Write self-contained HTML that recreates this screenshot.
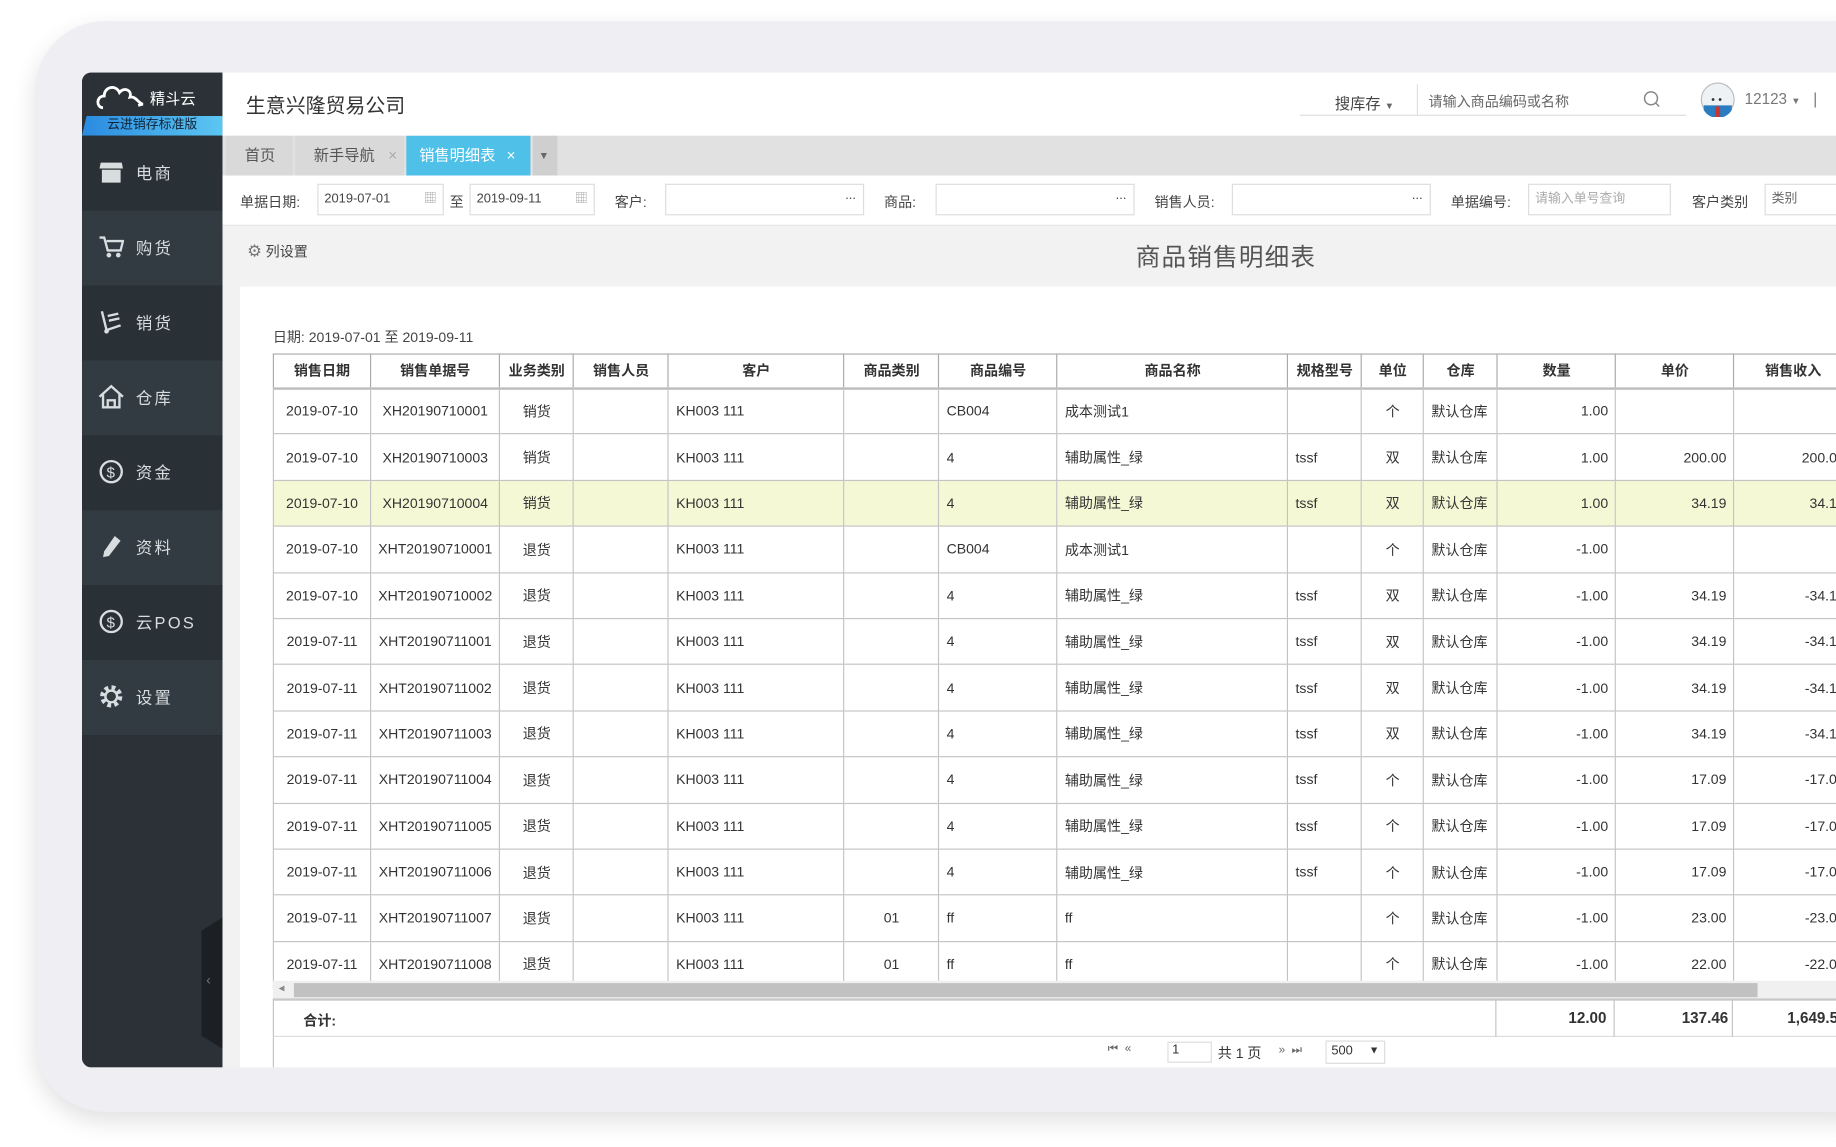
<!DOCTYPE html>
<html><head><meta charset="utf-8">
<style>
*{box-sizing:border-box;margin:0;padding:0}
html,body{width:1836px;height:1147px;overflow:hidden;background:#fff}
body{font-family:"Liberation Sans","Noto Sans CJK SC",sans-serif;color:#333}
#w{position:absolute;left:0;top:0;width:1568px;height:980px;transform:scale(1.17092,1.1704);transform-origin:0 0;overflow:hidden;background:#fff}
.abs{position:absolute}
.card{left:30px;top:18px;width:1600px;height:932px;background:#eeeef3;border-radius:60px;box-shadow:0 8px 20px rgba(0,0,0,.12)}
.app{left:70px;top:62px;width:1520px;height:850px;background:#f2f2f2;border-radius:8px 0 0 8px;overflow:hidden}
.side{left:0;top:0;width:120px;height:850px;background:#2b3136}
.side .it{position:absolute;left:0;width:120px;height:64px;color:#d8dde0;font-size:14px;letter-spacing:2px}
.side .it span{position:absolute;left:46px;top:22px}
.side .it svg{position:absolute;left:14px;top:20px}
.hdr{left:120px;top:0;width:1400px;height:54px;background:#fff}
.tabs{left:120px;top:54px;width:1400px;height:34px;background:#e1e1e1}
.tab{position:absolute;top:0;height:34px;line-height:34px;font-size:13px;color:#555;background:#d9d9d9;padding-left:16px}
.flt{left:120px;top:88px;width:1400px;height:43px;background:#fff;border-bottom:1px solid #e6e6e6}
.lbl{position:absolute;top:14px;font-size:12px;color:#444}
.inp{position:absolute;top:7px;height:27px;border:1px solid #ddd;background:#fff;font-size:11px;color:#444;line-height:25px;padding-left:5px}
.panel{left:135px;top:183px;width:1400px;height:680px;background:#fff}
table{border-collapse:collapse;table-layout:fixed;position:absolute;left:163px;top:240px;font-size:12px}
td,th{border:1px solid #c4c4c4;height:39.4px;padding:0 6px;white-space:nowrap;overflow:hidden;color:#333;font-weight:normal}
th{height:29px;font-weight:bold;text-align:center;border-color:#aaa;border-bottom:2px solid #bbb}
td.c{text-align:center}td.r{text-align:right}
tr.hl td{background:#f5f8d4}
</style></head><body><div id="w">
<div class="abs card"></div>
<div class="abs app">
 <div class="abs side">
  <div class="abs" style="left:0;top:0;width:120px;height:37px;background:#2b3136"></div>
  <svg class="abs" style="left:12px;top:6px" width="44" height="30" viewBox="0 0 44 30"><path d="M6 24 C0 24 0 14 7 14 C7 6 17 4 20 11 C24 6 31 9 29 15 C34 14 36 20 40 21 L36 22" fill="none" stroke="#fff" stroke-width="2.4"/></svg>
  <div class="abs" style="left:58px;top:12px;color:#fff;font-size:13px">精斗云</div>
  <div class="abs" style="left:0;top:37px;width:120px;height:17px;background:linear-gradient(90deg,#2a8be0,#5cc6f2);color:#123;font-size:11px;line-height:17px;text-align:center;clip-path:polygon(4px 0,100% 0,100% 100%,0 100%)">云进销存标准版</div>
  <div class="it" style="top:54px;background:#2a3136"><svg width="22" height="22" viewBox="0 0 22 22"><path d="M2 3h18l1 5H1zM3 9h16v11H3zM7 13h8v5H7z" fill="#d8dde0"/></svg><span>电商</span></div>
  <div class="it" style="top:118px;background:#323b42"><svg width="22" height="22" viewBox="0 0 22 22"><path d="M1 3h4l3 11h11l2-8H7" fill="none" stroke="#d8dde0" stroke-width="2"/><circle cx="9" cy="18" r="2" fill="#d8dde0"/><circle cx="17" cy="18" r="2" fill="#d8dde0"/></svg><span>购货</span></div>
  <div class="it" style="top:182px;background:#2a3136"><svg width="22" height="22" viewBox="0 0 22 22"><path d="M3 2l4 16 12-4M8 6l9-2M9 10l9-2" fill="none" stroke="#d8dde0" stroke-width="2"/><circle cx="7" cy="19" r="2" fill="#d8dde0"/></svg><span>销货</span></div>
  <div class="it" style="top:246px;background:#323b42"><svg width="22" height="22" viewBox="0 0 22 22"><path d="M1 11L11 2l10 9M4 9v11h14V9M8 20v-6h6v6" fill="none" stroke="#d8dde0" stroke-width="2"/></svg><span>仓库</span></div>
  <div class="it" style="top:310px;background:#2a3136"><svg width="22" height="22" viewBox="0 0 22 22"><circle cx="11" cy="11" r="9" fill="none" stroke="#d8dde0" stroke-width="2"/><text x="7" y="16" font-size="13" fill="#d8dde0" font-family="Liberation Sans">$</text></svg><span>资金</span></div>
  <div class="it" style="top:374px;background:#323b42"><svg width="22" height="22" viewBox="0 0 22 22"><path d="M14 2l5 4-10 13-5 1 1-5z" fill="#d8dde0"/></svg><span>资料</span></div>
  <div class="it" style="top:438px;background:#2a3136"><svg width="22" height="22" viewBox="0 0 22 22"><circle cx="11" cy="11" r="9" fill="none" stroke="#d8dde0" stroke-width="2"/><text x="7" y="16" font-size="13" fill="#d8dde0" font-family="Liberation Sans">$</text></svg><span>云POS</span></div>
  <div class="it" style="top:502px;background:#323b42"><svg width="22" height="22" viewBox="0 0 22 22"><circle cx="11" cy="11" r="7" fill="none" stroke="#d8dde0" stroke-width="5" stroke-dasharray="3 2.5"/><circle cx="11" cy="11" r="5" fill="none" stroke="#d8dde0" stroke-width="2"/></svg><span>设置</span></div>
  <div class="abs" style="left:102px;top:722px;width:18px;height:112px;background:#1c2024;clip-path:polygon(100% 0,100% 100%,0 90%,0 10%)"></div>
  <div class="abs" style="left:106px;top:768px;color:#777;font-size:12px">‹</div>
 </div>
 <div class="abs hdr">
  <div class="abs" style="left:20px;top:14px;font-size:17px;color:#333">生意兴隆贸易公司</div>
  <div class="abs" style="left:920px;top:0;width:330px;height:37px;border-bottom:1px solid #ddd"></div>
  <div class="abs" style="left:950px;top:16px;font-size:13px;color:#444">搜库存 <span style="font-size:8px;color:#666">▼</span></div>
  <div class="abs" style="left:1020px;top:10px;width:1px;height:26px;background:#e0e0e0"></div>
  <div class="abs" style="left:1030px;top:16px;font-size:12px;color:#666">请输入商品编码或名称</div>
  <svg class="abs" style="left:1213px;top:15px" width="16" height="16"><circle cx="7" cy="7" r="5.5" fill="none" stroke="#888" stroke-width="1.3"/><path d="M11 11l3 3" stroke="#888" stroke-width="1.3"/></svg>
  <svg class="abs" style="left:1262px;top:8px" width="30" height="30" viewBox="0 0 30 30"><circle cx="15" cy="15" r="14" fill="#eef2f5" stroke="#bbb"/><path d="M3 20h24v4a14 14 0 0 1-24 0z" fill="#2a7dc0"/><path d="M13 21h4v9h-4z" fill="#c33"/><circle cx="11" cy="15" r="1.2" fill="#333"/><circle cx="17" cy="15" r="1.2" fill="#333"/></svg>
  <div class="abs" style="left:1300px;top:15px;font-size:13px;color:#777">12123 <span style="font-size:8px">▼</span>&nbsp;&nbsp;&nbsp;|</div>
 </div>
 <div class="abs tabs">
  <div class="tab" style="left:3px;width:57px">首页</div>
  <div class="tab" style="left:62px;width:93px">新手导航 <span style="color:#aaa;margin-left:8px">×</span></div>
  <div class="tab" style="left:157px;width:106px;background:#4fc0e8;color:#fff;padding-left:11px">销售明细表 <span style="margin-left:6px">×</span></div>
  <div class="tab" style="left:265px;width:21px;background:#cfcfcf;padding-left:5px;font-size:9px;color:#666">▼</div>
 </div>
 <div class="abs flt">
  <div class="lbl" style="left:15px">单据日期:</div>
  <div class="inp" style="left:81px;width:108px">2019-07-01<span style="position:absolute;right:5px;color:#aaa">▦</span></div>
  <div class="lbl" style="left:194px">至</div>
  <div class="inp" style="left:211px;width:107px">2019-09-11<span style="position:absolute;right:5px;color:#aaa">▦</span></div>
  <div class="lbl" style="left:335px">客户:</div>
  <div class="inp" style="left:378px;width:170px"><span style="position:absolute;right:6px;top:-3px">...</span></div>
  <div class="lbl" style="left:565px">商品:</div>
  <div class="inp" style="left:609px;width:170px"><span style="position:absolute;right:6px;top:-3px">...</span></div>
  <div class="lbl" style="left:796px">销售人员:</div>
  <div class="inp" style="left:862px;width:170px"><span style="position:absolute;right:6px;top:-3px">...</span></div>
  <div class="lbl" style="left:1049px">单据编号:</div>
  <div class="inp" style="left:1115px;width:122px;color:#aaa">请输入单号查询</div>
  <div class="lbl" style="left:1255px">客户类别</div>
  <div class="inp" style="left:1317px;width:100px;color:#666">类别</div>
 </div>
 <div class="abs" style="left:141px;top:144px;font-size:12px;color:#444"><span style="color:#777;font-size:14px">⚙</span> 列设置</div>
 <div class="abs" style="left:900px;top:142px;font-size:21px;color:#555;letter-spacing:1px">商品销售明细表</div>
 <div class="abs panel"></div>
 <div class="abs" style="left:163px;top:217px;font-size:12px;color:#444">日期: 2019-07-01 至 2019-09-11</div>
 <table>
  <colgroup><col style="width:83px"><col style="width:110px"><col style="width:63px"><col style="width:81px"><col style="width:150px"><col style="width:81px"><col style="width:101px"><col style="width:197px"><col style="width:63px"><col style="width:53px"><col style="width:63px"><col style="width:101px"><col style="width:101px"><col style="width:101px"></colgroup>
  <tr><th>销售日期</th><th>销售单据号</th><th>业务类别</th><th>销售人员</th><th>客户</th><th>商品类别</th><th>商品编号</th><th>商品名称</th><th>规格型号</th><th>单位</th><th>仓库</th><th>数量</th><th>单价</th><th>销售收入</th></tr>
  <tr><td class="c">2019-07-10</td><td class="c">XH20190710001</td><td class="c">销货</td><td></td><td>KH003 111</td><td></td><td>CB004</td><td>成本测试1</td><td></td><td class="c">个</td><td>默认仓库</td><td class="r">1.00</td><td></td><td></td></tr>
  <tr><td class="c">2019-07-10</td><td class="c">XH20190710003</td><td class="c">销货</td><td></td><td>KH003 111</td><td></td><td>4</td><td>辅助属性_绿</td><td>tssf</td><td class="c">双</td><td>默认仓库</td><td class="r">1.00</td><td class="r">200.00</td><td class="r">200.00</td></tr>
  <tr class="hl"><td class="c">2019-07-10</td><td class="c">XH20190710004</td><td class="c">销货</td><td></td><td>KH003 111</td><td></td><td>4</td><td>辅助属性_绿</td><td>tssf</td><td class="c">双</td><td>默认仓库</td><td class="r">1.00</td><td class="r">34.19</td><td class="r">34.19</td></tr>
  <tr><td class="c">2019-07-10</td><td class="c">XHT20190710001</td><td class="c">退货</td><td></td><td>KH003 111</td><td></td><td>CB004</td><td>成本测试1</td><td></td><td class="c">个</td><td>默认仓库</td><td class="r">-1.00</td><td></td><td></td></tr>
  <tr><td class="c">2019-07-10</td><td class="c">XHT20190710002</td><td class="c">退货</td><td></td><td>KH003 111</td><td></td><td>4</td><td>辅助属性_绿</td><td>tssf</td><td class="c">双</td><td>默认仓库</td><td class="r">-1.00</td><td class="r">34.19</td><td class="r">-34.19</td></tr>
  <tr><td class="c">2019-07-11</td><td class="c">XHT20190711001</td><td class="c">退货</td><td></td><td>KH003 111</td><td></td><td>4</td><td>辅助属性_绿</td><td>tssf</td><td class="c">双</td><td>默认仓库</td><td class="r">-1.00</td><td class="r">34.19</td><td class="r">-34.19</td></tr>
  <tr><td class="c">2019-07-11</td><td class="c">XHT20190711002</td><td class="c">退货</td><td></td><td>KH003 111</td><td></td><td>4</td><td>辅助属性_绿</td><td>tssf</td><td class="c">双</td><td>默认仓库</td><td class="r">-1.00</td><td class="r">34.19</td><td class="r">-34.19</td></tr>
  <tr><td class="c">2019-07-11</td><td class="c">XHT20190711003</td><td class="c">退货</td><td></td><td>KH003 111</td><td></td><td>4</td><td>辅助属性_绿</td><td>tssf</td><td class="c">双</td><td>默认仓库</td><td class="r">-1.00</td><td class="r">34.19</td><td class="r">-34.19</td></tr>
  <tr><td class="c">2019-07-11</td><td class="c">XHT20190711004</td><td class="c">退货</td><td></td><td>KH003 111</td><td></td><td>4</td><td>辅助属性_绿</td><td>tssf</td><td class="c">个</td><td>默认仓库</td><td class="r">-1.00</td><td class="r">17.09</td><td class="r">-17.09</td></tr>
  <tr><td class="c">2019-07-11</td><td class="c">XHT20190711005</td><td class="c">退货</td><td></td><td>KH003 111</td><td></td><td>4</td><td>辅助属性_绿</td><td>tssf</td><td class="c">个</td><td>默认仓库</td><td class="r">-1.00</td><td class="r">17.09</td><td class="r">-17.09</td></tr>
  <tr><td class="c">2019-07-11</td><td class="c">XHT20190711006</td><td class="c">退货</td><td></td><td>KH003 111</td><td></td><td>4</td><td>辅助属性_绿</td><td>tssf</td><td class="c">个</td><td>默认仓库</td><td class="r">-1.00</td><td class="r">17.09</td><td class="r">-17.09</td></tr>
  <tr><td class="c">2019-07-11</td><td class="c">XHT20190711007</td><td class="c">退货</td><td></td><td>KH003 111</td><td class="c">01</td><td>ff</td><td>ff</td><td></td><td class="c">个</td><td>默认仓库</td><td class="r">-1.00</td><td class="r">23.00</td><td class="r">-23.00</td></tr>
  <tr><td class="c">2019-07-11</td><td class="c">XHT20190711008</td><td class="c">退货</td><td></td><td>KH003 111</td><td class="c">01</td><td>ff</td><td>ff</td><td></td><td class="c">个</td><td>默认仓库</td><td class="r">-1.00</td><td class="r">22.00</td><td class="r">-22.00</td></tr>
 </table>
 <div class="abs" style="left:163px;top:776px;width:1400px;height:16px;background:#f0f0f0"></div>
 <div class="abs" style="left:181px;top:778px;width:1250px;height:12px;background:#c1c1c1"></div>
 <div class="abs" style="left:168px;top:777px;font-size:10px;color:#888">◂</div>
 <div class="abs" style="left:163px;top:791px;width:1400px;height:33px;background:#fff;border-top:2px solid #c8c8c8;border-bottom:1px solid #ddd;border-left:1px solid #c4c4c4"></div>
 <div class="abs" style="left:1207px;top:792px;width:1px;height:32px;background:#c4c4c4"></div>
 <div class="abs" style="left:1308px;top:792px;width:1px;height:32px;background:#c4c4c4"></div>
 <div class="abs" style="left:1409px;top:792px;width:1px;height:32px;background:#c4c4c4"></div>
 <div class="abs" style="left:189px;top:801px;font-size:12px;font-weight:bold">合计:</div>
 <div class="abs" style="left:1207px;top:800px;width:95px;text-align:right;font-size:13px;font-weight:bold">12.00</div>
 <div class="abs" style="left:1308px;top:800px;width:98px;text-align:right;font-size:13px;font-weight:bold">137.46</div>
 <div class="abs" style="left:1409px;top:800px;width:98px;text-align:right;font-size:13px;font-weight:bold">1,649.58</div>
 <div class="abs" style="left:163px;top:824px;width:1px;height:30px;background:#c4c4c4"></div>
 <div class="abs" style="left:876px;top:829px;font-size:10px;color:#666">⏮&nbsp;&nbsp;«</div>
 <div class="abs" style="left:927px;top:828px;width:38px;height:18px;border:1px solid #ddd;font-size:11px;padding-left:3px">1</div>
 <div class="abs" style="left:970px;top:829px;font-size:12px">共 1 页</div>
 <div class="abs" style="left:1022px;top:830px;font-size:10px;color:#666">»&nbsp;&nbsp;⏭</div>
 <div class="abs" style="left:1062px;top:827px;width:51px;height:20px;border:1px solid #ddd;font-size:11px;padding:2px 4px">500 <span style="float:right;font-size:9px">▼</span></div>
</div>
</div></body></html>
